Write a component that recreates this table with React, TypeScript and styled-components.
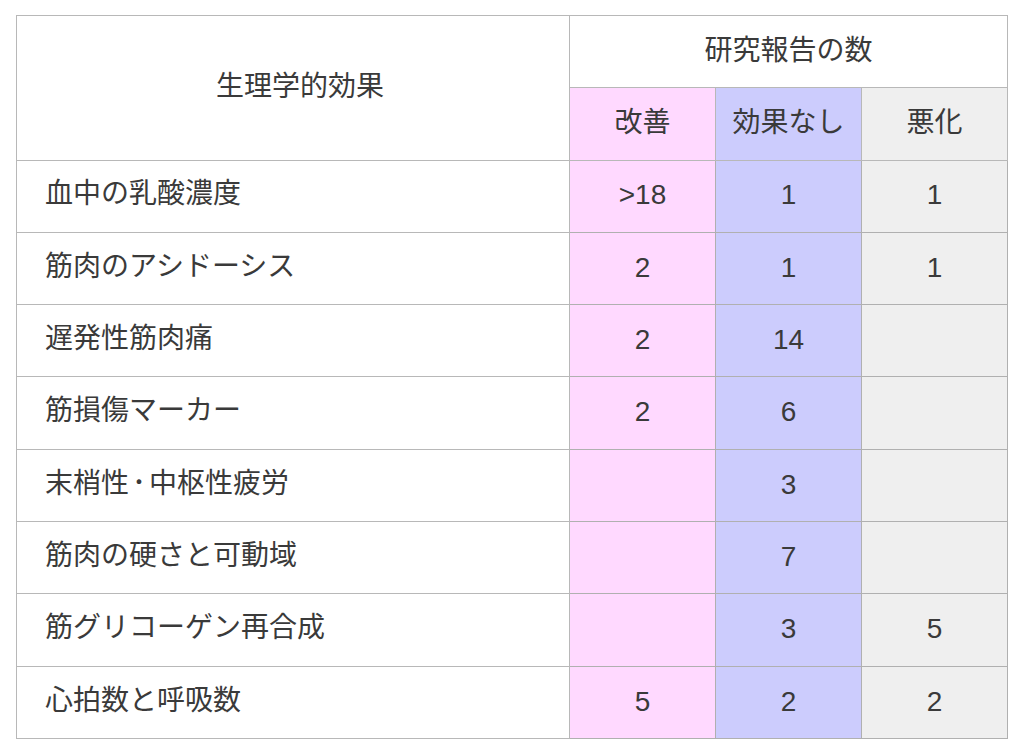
import styled, { createGlobalStyle } from 'styled-components';

const GlobalStyle = createGlobalStyle`
  html, body {
    margin: 0;
    padding: 0;
    background: #ffffff;
  }
  body {
    font-family: "Liberation Sans", Arial, "Noto Sans CJK JP", sans-serif;
    color: #3a3a3a;
  }
`

const Page = styled.div`
  padding: 15px 16px;
`

const Table = styled.table`
  width: 991px;
  border-collapse: collapse;
  table-layout: fixed;
  font-size: 28px;
  line-height: 1.2;
`

const Row = styled.tr`
  height: 72.3px;
`

type Tone = 'none' | 'pink' | 'blue' | 'gray';

const tones: Record<Tone, string> = {
  none: '#ffffff',
  pink: '#ffd9ff',
  blue: '#ccccfd',
  gray: '#efefef',
};

const HeadCell = styled.th<{ $tone?: Tone; $shift?: number }>`
  border: 1px solid #b8b8b8;
  background: ${(p) => tones[p.$tone || 'none']};
  font-weight: normal;
  text-align: center;
  vertical-align: middle;
  padding: 0 0 0 ${(p) => p.$shift || 0}px;
  padding-bottom: 2px;
`

const NameCell = styled.td`
  border: 1px solid #b8b8b8;
  padding: 0 0 4px 28px;
  text-align: left;
  vertical-align: middle;
`

const NumCell = styled.td<{ $tone: Tone }>`
  border: 1px solid #b0b0b0;
  background: ${(p) => tones[p.$tone]};
  text-align: center;
  vertical-align: middle;
  padding: 0 0 2px;
`

const Dot = styled.span`
  padding: 0 3px;
`

type Item = { name: React.ReactNode; good: string; none: string; bad: string };

const rows: Item[] = [
  { name: '血中の乳酸濃度', good: '>18', none: '1', bad: '1' },
  { name: '筋肉のアシドーシス', good: '2', none: '1', bad: '1' },
  { name: '遅発性筋肉痛', good: '2', none: '14', bad: '' },
  { name: '筋損傷マーカー', good: '2', none: '6', bad: '' },
  { name: <>末梢性<Dot>･</Dot>中枢性疲労</>, good: '', none: '3', bad: '' },
  { name: '筋肉の硬さと可動域', good: '', none: '7', bad: '' },
  { name: '筋グリコーゲン再合成', good: '', none: '3', bad: '5' },
  { name: '心拍数と呼吸数', good: '5', none: '2', bad: '2' },
];

const App = () => {
  return (
    <>
      <GlobalStyle />
      <Page>
        <Table>
          <colgroup>
            <col style={{ width: 553 }} />
            <col style={{ width: 146 }} />
            <col style={{ width: 146 }} />
            <col style={{ width: 146 }} />
          </colgroup>
          <thead>
            <Row>
              <HeadCell rowSpan={2} $shift={14}>生理学的効果</HeadCell>
              <HeadCell colSpan={3}>研究報告の数</HeadCell>
            </Row>
            <Row>
              <HeadCell $tone="pink">改善</HeadCell>
              <HeadCell $tone="blue">効果なし</HeadCell>
              <HeadCell $tone="gray">悪化</HeadCell>
            </Row>
          </thead>
          <tbody>
            {rows.map((r, i) => (
              <Row key={i}>
                <NameCell>{r.name}</NameCell>
                <NumCell $tone="pink">{r.good}</NumCell>
                <NumCell $tone="blue">{r.none}</NumCell>
                <NumCell $tone="gray">{r.bad}</NumCell>
              </Row>
            ))}
          </tbody>
        </Table>
      </Page>
    </>
  );
}
export default App;
